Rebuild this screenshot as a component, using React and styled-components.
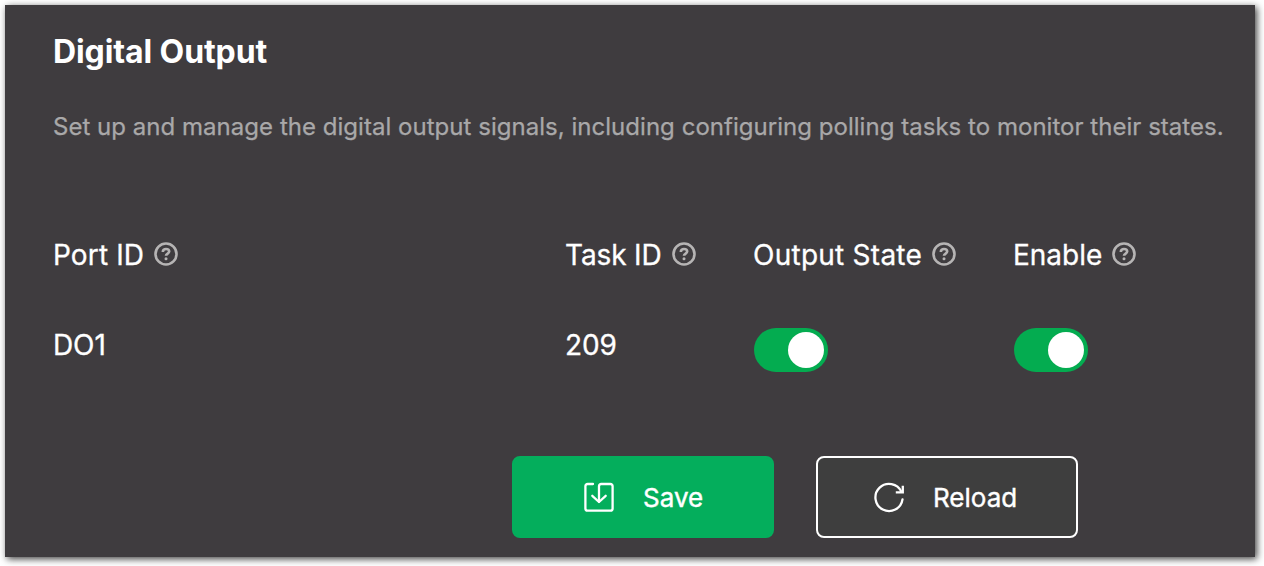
import React from 'react';
import styled, { createGlobalStyle } from 'styled-components';

const GlobalStyle = createGlobalStyle`
  * { box-sizing: border-box; }
  body { margin: 0; background: #fff; font-family: Inter, "Liberation Sans", sans-serif; color: #fff; }
  h1, p { margin: 0; }
  button { font: inherit; color: inherit; }
`;

const Page = styled.div`
  width: 1264px;
  height: 566px;
  padding: 5px 9px 9px 5px;
  overflow: hidden;
`;

const Panel = styled.main`
  height: 552px;
  padding: 27px 0 0 48px;
  background: #3f3c3f;
  box-shadow: 2px 2px 7px rgba(0, 0, 0, 0.75);
`;

const Title = styled.h1`
  font-size: 32px;
  line-height: 40px;
  font-weight: 700;
  letter-spacing: -0.1px;
`;

const Description = styled.p`
  margin-top: 35px;
  font-size: 24px;
  line-height: 40px;
  font-weight: 400;
  letter-spacing: 0.03px;
  -webkit-text-stroke: 0.25px;
  color: #a9a8a9;
  white-space: nowrap;
`;

const Table = styled.section`
  display: grid;
  grid-template-columns: 512px 188px 260px 1fr;
  grid-template-rows: 40px 44px;
  row-gap: 53px;
  margin-top: 88px;
`;

const HeaderCell = styled.div`
  display: flex;
  align-items: center;
  gap: 10px;
  font-size: 28px;
  line-height: 40px;
  letter-spacing: ${({ $tracking }) => $tracking}px;
  -webkit-text-stroke: 0.3px;
  white-space: nowrap;
`;

const Cell = styled.div`
  font-size: 28px;
  line-height: 34px;
  letter-spacing: -0.1px;
  -webkit-text-stroke: 0.3px;
`;

const HelpIcon = styled.svg`
  width: 24px;
  height: 24px;
  flex: none;
  margin-top: -2px;
  fill: none;
  stroke: #b6b4b4;
`;

const Switch = styled.button`
  display: flex;
  align-items: center;
  justify-content: ${({ $on }) => ($on ? 'flex-end' : 'flex-start')};
  width: 74px;
  height: 44px;
  margin: 0 0 0 1px;
  padding: 0 4px;
  border: 0;
  border-radius: 22px;
  background: ${({ $on }) => ($on ? '#04ac50' : '#777')};
`;

const Knob = styled.span`
  width: 36px;
  height: 36px;
  border-radius: 50%;
  background: #fff;
`;

const Actions = styled.footer`
  display: flex;
  gap: 42px;
  margin: 84px 0 0 459px;
`;

const Button = styled.button`
  display: flex;
  align-items: center;
  gap: 28px;
  width: 262px;
  height: 82px;
  padding: 0 0 0 ${({ $primary }) => ($primary ? 69 : 55)}px;
  border: 2px solid ${({ $primary }) => ($primary ? '#04ae5c' : '#fff')};
  border-radius: 8px;
  background: ${({ $primary }) => ($primary ? '#04ae5c' : '#3e3e3e')};
  font-size: 26px;
  font-weight: 400;
  -webkit-text-stroke: 0.4px;
`;

const ButtonIcon = styled.svg`
  width: 32px;
  height: 32px;
  flex: none;
  fill: none;
  stroke: #fff;
  stroke-width: 2.3;
  stroke-linecap: round;
  stroke-linejoin: round;
`;

function Help() {
  return (
    <HelpIcon viewBox="0 0 24 24">
      <circle cx="12" cy="12" r="10.5" strokeWidth="2.6" />
      <path d="M8.8 9.9C8.8 8 10.1 7 12 7s3.2 1 3.2 2.6c0 2-3.2 2-3.2 4.2" strokeWidth="2.6" />
      <circle cx="12" cy="16.8" r="1.5" fill="#b6b4b4" stroke="none" />
    </HelpIcon>
  );
}

function Toggle({ label }) {
  const [on, setOn] = React.useState(true);
  return (
    <Switch $on={on} role="switch" aria-checked={on} aria-label={label} onClick={() => setOn(!on)}>
      <Knob />
    </Switch>
  );
}

const columns = [
  { name: 'Port ID', tracking: 0.13 },
  { name: 'Task ID', tracking: -0.13 },
  { name: 'Output State', tracking: 0.25 },
  { name: 'Enable', tracking: 0 },
];

export default function App() {
  return (
    <Page>
      <GlobalStyle />
      <Panel>
        <Title>Digital Output</Title>
        <Description>
          Set up and manage the digital output signals, including configuring polling tasks to monitor their states.
        </Description>
        <Table>
          {columns.map(({ name, tracking }) => (
            <HeaderCell key={name} $tracking={tracking}>
              <span>{name}</span>
              <Help />
            </HeaderCell>
          ))}
          <Cell>DO1</Cell>
          <Cell>209</Cell>
          <Toggle label="Output State" />
          <Toggle label="Enable" />
        </Table>
        <Actions>
          <Button $primary>
            <ButtonIcon viewBox="0 0 32 32">
              <path d="M10 3H4.6A2.2 2.2 0 0 0 2.4 5.2v22.2a2.2 2.2 0 0 0 2.2 2.2h22.8a2.2 2.2 0 0 0 2.2-2.2V5.2A2.2 2.2 0 0 0 27.4 3H18.2A2.2 2.2 0 0 0 16 5.2v15.6" />
              <path d="m9.3 14.8 6.7 6.2 6.7-6.2" />
            </ButtonIcon>
            <span>Save</span>
          </Button>
          <Button>
            <ButtonIcon viewBox="0 0 32 32">
              <path d="M29.5 18.4A13.6 13.6 0 1 1 28.4 10.8" />
              <path d="M29.8 4.8v6.5h-7" strokeLinejoin="miter" strokeLinecap="butt" />
            </ButtonIcon>
            <span>Reload</span>
          </Button>
        </Actions>
      </Panel>
    </Page>
  );
}
